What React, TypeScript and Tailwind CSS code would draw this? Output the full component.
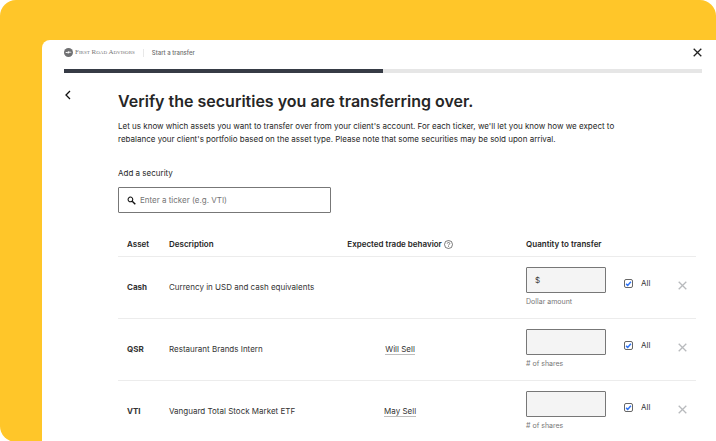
import React, { useState } from 'react';

interface Security {
  ticker: string;
  description: string;
  behavior?: string;
  unit: string;
  isCash?: boolean;
}

const SECURITIES: Security[] = [
  {
    ticker: 'Cash',
    description: 'Currency in USD and cash equivalents',
    unit: 'Dollar amount',
    isCash: true
  },
  {
    ticker: 'QSR',
    description: 'Restaurant Brands Intern',
    behavior: 'Will Sell',
    unit: '# of shares'
  },
  {
    ticker: 'VTI',
    description: 'Vanguard Total Stock Market ETF',
    behavior: 'May Sell',
    unit: '# of shares'
  }
];

const CrossIcon = ({ className }: { className: string }) => (
  <svg
    viewBox="0 0 9 9"
    className={className}
    fill="none"
    stroke="currentColor"
    strokeWidth="1.3"
    aria-hidden="true"
  >
    <path d="M0.7 0.7l7.6 7.6M8.3 0.7L0.7 8.3" />
  </svg>
);

const Logo = () => (
  <div className="flex items-center gap-[2px] text-[#757575]">
    <svg viewBox="0 0 18 18" className="size-[9px]" aria-hidden="true">
      <circle cx="9" cy="9" r="9" fill="#6f7072" />
      <path
        d="M3 8.2l3.4-.4 3.2-1.5c1-.4 1.6.4.8 1l-.8.6 4.3-.5c1.3 0 1.3 1.6 0 1.7l-4.2.4-1.2 2.1H7.3l.6-2-4.2.2z"
        fill="#fff"
      />
    </svg>
    <span className="font-['Liberation_Serif',serif] text-[7px] leading-3 whitespace-nowrap">
      F<span className="text-[5px]">IRST</span> R<span className="text-[5px]">OAD</span> A
      <span className="text-[5px]">DVISORS</span>
    </span>
  </div>
);

/**
 * Top bar with the advisor logo, flow name and progress
 */
const Header = () => (
  <header>
    <div className="flex h-[29px] items-center pb-1">
      <Logo />
      <span className="mx-2 h-2 w-px bg-[#e8e8e8]" />
      <span className="text-[6px] leading-3 font-medium text-[#6b6b6b]">Start a transfer</span>
      <button type="button" aria-label="Close" className="ml-auto text-[#222]">
        <CrossIcon className="size-[9px]" />
      </button>
    </div>
    <div
      className="h-[4px] bg-[#e6e6e6]"
      role="progressbar"
      aria-label="Transfer progress"
      aria-valuenow={50}
    >
      <div className="h-full w-1/2 bg-[#363b45]" />
    </div>
  </header>
);

const SecurityRow = ({ security }: { security: Security }) => {
  const [all, setAll] = useState(true);
  const quantityId = `quantity-${security.ticker}`;

  return (
    <tr className="border-b border-[#ececec] last:border-0">
      <th scope="row" className="pl-[9px] text-left font-bold">
        {security.ticker}
      </th>
      <td>{security.description}</td>
      <td className="text-center">
        {security.behavior && (
          <button type="button" className="border-b border-[#bdbdbd] leading-[10px]">
            {security.behavior}
          </button>
        )}
      </td>
      <td className="py-[10px] pl-[50px]">
        <div className="flex h-[26px] w-[80px] items-center rounded-[1px] border border-[#777] bg-[#f4f4f4] px-2">
          {security.isCash && <span>$</span>}
          <input id={quantityId} type="text" className="w-full min-w-0 bg-transparent px-1 outline-none" />
        </div>
        <label htmlFor={quantityId} className="mt-[3px] block text-[7px] leading-3 text-[#767676]">
          {security.unit}
        </label>
      </td>
      <td className="pb-2 pl-2">
        <label className="flex items-center gap-2">
          <span className="grid size-[9px]">
            <input
              type="checkbox"
              checked={all}
              onChange={(e) => setAll(e.target.checked)}
              className="peer col-start-1 row-start-1 size-[9px] appearance-none rounded-[2px] border border-[#666] bg-white"
            />
            <svg
              viewBox="0 0 9 9"
              className="pointer-events-none col-start-1 row-start-1 hidden size-[9px] peer-checked:block"
              fill="none"
              stroke="#2f74f5"
              strokeWidth="1.5"
              aria-hidden="true"
            >
              <path d="M2.1 4.9l1.6 1.5 3.2-3.6" />
            </svg>
          </span>
          All
        </label>
      </td>
      <td className="pb-[3px]">
        <button
          type="button"
          aria-label={`Remove ${security.ticker}`}
          className="ml-3 block text-[#b8babd]"
        >
          <CrossIcon className="size-[9px]" />
        </button>
      </td>
    </tr>
  );
};

const SecuritiesTable = () => (
  <table className="mt-5 w-full table-fixed border-collapse text-[8px] leading-3">
    <colgroup>
      <col className="w-[51px]" />
      <col />
      <col className="w-[152px]" />
      <col className="w-[140px]" />
      <col className="w-[50px]" />
      <col className="w-[30px]" />
    </colgroup>
    <thead>
      <tr className="h-[23px] border-b border-[#ececec] text-left">
        <th className="pl-[9px] font-semibold">Asset</th>
        <th className="font-semibold">Description</th>
        <th className="font-semibold">
          <div className="flex items-center justify-center gap-[2px] whitespace-nowrap">
            Expected trade behavior
            <svg viewBox="0 0 18 18" className="size-[9px] shrink-0" fill="none" stroke="#444" aria-hidden="true">
              <circle cx="9" cy="9" r="8" strokeWidth="1.4" />
              <path d="M6.5 7.2c0-3.2 5-3.2 5 0 0 1.8-2.5 1.8-2.5 3.8M9 12.3v1.6" strokeWidth="1.4" />
            </svg>
          </div>
        </th>
        <th className="pl-[50px] font-semibold whitespace-nowrap">Quantity to transfer</th>
        <td colSpan={2} />
      </tr>
    </thead>
    <tbody className="text-[#333]">
      {SECURITIES.map((security) => (
        <SecurityRow key={security.ticker} security={security} />
      ))}
    </tbody>
  </table>
);

export default function App() {
  return (
    <div className="bg-white font-[Inter,sans-serif] text-[#262626]">
      <div className="flex min-h-screen overflow-hidden rounded-t-2xl rounded-bl-2xl bg-[#ffc629] pt-10 pl-[42px]">
        <div className="w-full rounded-tl-lg bg-white pr-[14px] pl-[22px]">
          <Header />
          <div className="flex pr-[6px]">
            <div className="w-[54px] shrink-0 pt-[17px]">
              <button type="button" aria-label="Back" className="block text-[#111]">
                <svg
                  viewBox="0 0 9 10"
                  className="h-[10px] w-[9px]"
                  fill="none"
                  stroke="currentColor"
                  strokeWidth="1.3"
                  aria-hidden="true"
                >
                  <path d="M6 1L2 5l4 4" />
                </svg>
              </button>
            </div>
            <main className="min-w-0 grow pt-4">
              <h1 className="text-[16px] leading-6 font-semibold">
                Verify the securities you are transferring over.
              </h1>
              <p className="mt-[7px] max-w-[520px] text-[8px] leading-[13px]">
                Let us know which assets you want to transfer over from your client's account. For each
                ticker, we'll let you know how we expect to
                <br />
                rebalance your client's portfolio based on the asset type. Please note that some
                securities may be sold upon arrival.
              </p>
              <label htmlFor="ticker" className="mt-[21px] block text-[8px] leading-3">
                Add a security
              </label>
              <div className="mt-2 flex h-[26px] w-[213px] items-center gap-1 rounded-[1px] border border-[#777] px-2">
                <svg viewBox="0 0 10 10" className="size-[9px] shrink-0" fill="none" stroke="#111" aria-hidden="true">
                  <circle cx="3.8" cy="3.8" r="2.6" strokeWidth="1.2" />
                  <path d="M5.8 5.8l3.4 3.4" strokeWidth="1.6" />
                </svg>
                <input
                  id="ticker"
                  type="text"
                  placeholder="Enter a ticker (e.g. VTI)"
                  className="w-full min-w-0 text-[8px] outline-none placeholder:text-[#757575]"
                />
              </div>
              <SecuritiesTable />
            </main>
          </div>
        </div>
      </div>
    </div>
  );
}
